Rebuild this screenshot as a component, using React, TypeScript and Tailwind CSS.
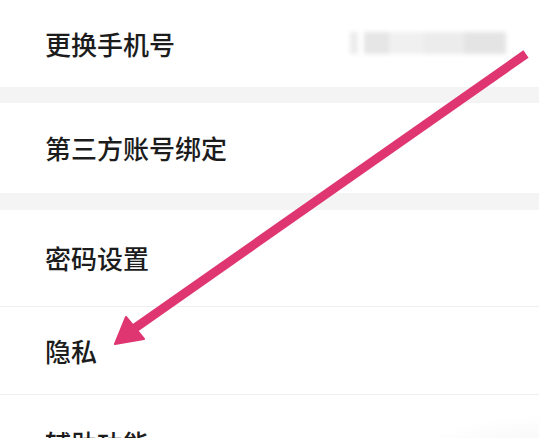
import React from "react";

const font = { fontFamily: '"Noto Sans CJK SC", "Noto Sans", sans-serif' };

function Row({ label, h, children }: { label: string; h: string; children?: React.ReactNode }) {
  return (
    <div className={`flex items-center justify-between pl-[45px] pr-[27px] bg-white ${h}`}>
      <span className="text-[26px] leading-none font-medium text-[#1c1c1c]">{label}</span>
      {children}
    </div>
  );
}

export default function App() {
  return (
    <div className="relative w-[539px] h-[438px] overflow-hidden bg-white" style={font}>
      <div className="flex flex-col">
        <Row label="更换手机号" h="h-[87px]">
          <div className="relative flex items-center h-[22px] w-[162px] -mt-[2px] blur-[2px]">
            <div className="h-[22px] w-[8px] bg-[#ececec]" />
            <div className="h-[22px] w-[6px] bg-white" />
            <div className="h-[22px] w-[25px] bg-[#e6e6e6]" />
            <div className="h-[22px] w-[35px] bg-[#f0f0f0]" />
            <div className="h-[22px] w-[40px] bg-[#ececec]" />
            <div className="h-[22px] w-[42px] bg-[#e4e4e4]" />
          </div>
        </Row>
        <div className="h-[16px] bg-[#f4f4f4]" />
        <Row label="第三方账号绑定" h="h-[90px]" />
        <div className="h-[17px] bg-[#f4f4f4]" />
        <Row label="密码设置" h="h-[96px]" />
        <div className="h-px bg-[#efefef]" />
        <Row label="隐私" h="h-[87px]" />
        <div className="h-px bg-[#efefef]" />
        <div className="relative">
          <Row label="辅助功能" h="h-[95px]" />
          <div className="absolute right-0 top-[20px] w-[150px] h-[70px] bg-[radial-gradient(ellipse_at_right_bottom,#ededed,transparent_70%)]" />
        </div>
      </div>
      <svg className="absolute inset-0" width="539" height="438" viewBox="0 0 539 438">
        <line x1="526" y1="54" x2="135" y2="328" stroke="#df3570" strokeWidth="9" strokeLinecap="butt" />
        <polygon points="115,344 126,317 144,339" fill="#df3570" stroke="#df3570" strokeWidth="2" strokeLinejoin="round" />
      </svg>
    </div>
  );
}
